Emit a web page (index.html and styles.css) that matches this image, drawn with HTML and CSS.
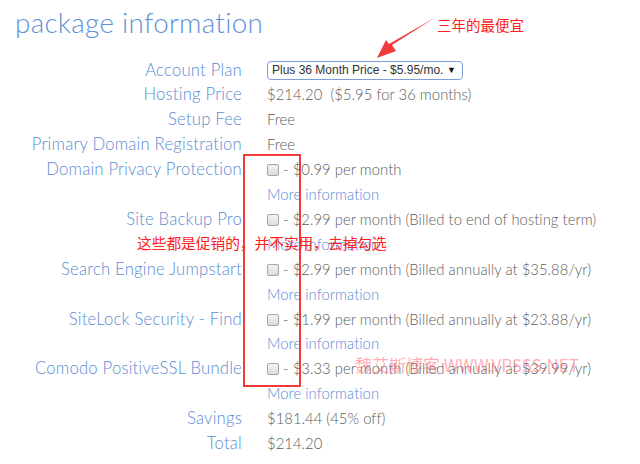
FILE: index.html
```html
<!DOCTYPE html>
<html>
<head>
<meta charset="utf-8">
<link rel="stylesheet" href="styles.css">
</head>
<body>
<div class="page">
  <h1 class="title">package information</h1>
  <div class="grid">
    <div class="lbl">Account Plan</div>
    <div class="val"><div class="select"><span>Plus 36 Month Price - $5.95/mo.</span><span class="caret">▼</span></div></div>

    <div class="lbl">Hosting Price</div>
    <div class="val">$214.20&nbsp; ($5.95 for 36 months)</div>

    <div class="lbl">Setup Fee</div>
    <div class="val">Free</div>

    <div class="lbl">Primary Domain Registration</div>
    <div class="val">Free</div>

    <div class="lbl">Domain Privacy Protection</div>
    <div class="val"><div><span class="cb"></span> - $0.99 per month</div><div class="more">More information</div></div>

    <div class="lbl">Site Backup Pro</div>
    <div class="val"><div><span class="cb"></span> - $2.99 per month (Billed to end of hosting term)</div><div class="more">More information</div></div>

    <div class="lbl">Search Engine Jumpstart</div>
    <div class="val"><div><span class="cb"></span> - $2.99 per month (Billed annually at $35.88/yr)</div><div class="more">More information</div></div>

    <div class="lbl">SiteLock Security - Find</div>
    <div class="val"><div><span class="cb"></span> - $1.99 per month (Billed annually at $23.88/yr)</div><div class="more">More information</div></div>

    <div class="lbl">Comodo PositiveSSL Bundle</div>
    <div class="val"><div><span class="cb"></span> - $3.33 per month (Billed annually at $39.99/yr)</div><div class="more">More information</div></div>

    <div class="lbl">Savings</div>
    <div class="val">$181.44 (45% off)</div>

    <div class="lbl">Total</div>
    <div class="val">$214.20</div>
  </div>

  <div class="redbox"></div>
  <div class="note1">三年的最便宜</div>
  <svg class="arrow" width="70" height="45" viewBox="0 0 70 45"><path d="M66 4 L22 32 L26 38 L7 45 L16 27 L19 31 Z" fill="#f33a3a"/></svg>
  <div class="note2">这些都是促销的，并不实用，去掉勾选</div>
  <div class="watermark">魏艾斯博客 WWW.VPSSS.NET</div>
</div>
</body>
</html>
```
FILE: styles.css
```css
html, body { margin: 0; padding: 0; background: #fff; }
.page {
  position: relative;
  width: 640px;
  height: 464px;
  overflow: hidden;
  font-family: Lato, "Noto Sans", sans-serif;
}
.title {
  margin: 0;
  padding: 4px 0 0 15px;
  height: 57.5px;
  box-sizing: border-box;
  font-weight: 300;
  font-size: 27.8px;
  line-height: 38px;
  color: #5f90d8;
  letter-spacing: 0.3px;
}
.grid {
  display: grid;
  grid-template-columns: 242px 1fr;
  column-gap: 25px;
  line-height: 24.9px;
  align-items: start;
}
.lbl {
  text-align: right;
  color: #5b8cd3;
  font-weight: 300;
  font-size: 16.7px;
  letter-spacing: 0.2px;
  white-space: nowrap;
}
.val {
  color: #5c5c5c;
  font-weight: 300;
  font-size: 14.8px;
  letter-spacing: 0.05px;
  white-space: nowrap;
}
.more { color: #5a8ad6; }
.select {
  display: inline-flex;
  align-items: center;
  justify-content: space-between;
  box-sizing: border-box;
  width: 196px;
  height: 19px;
  margin-top: 3px;
  padding: 0 6px 0 4px;
  border: 1px solid #7c9fd6;
  border-radius: 4px;
  font-family: "Liberation Sans", Arial, sans-serif;
  font-size: 12px;
  line-height: 17px;
  letter-spacing: 0;
  color: #333;
  vertical-align: top;
}
.caret { font-size: 9px; color: #111; }
.cb {
  display: inline-block;
  width: 10px;
  height: 10px;
  border: 1px solid #a5a5a5;
  border-radius: 2px;
  background: linear-gradient(#f4f4f4, #dcdcdc);
  vertical-align: -1px;
}
.redbox {
  position: absolute;
  left: 243px;
  top: 154px;
  width: 54px;
  height: 229px;
  border: 2px solid #f33a3a;
}
.note1, .note2 {
  position: absolute;
  color: #ff2020;
  font-family: "Noto Sans CJK SC", sans-serif;
  white-space: nowrap;
}
.note1 { left: 437px; top: 14px; font-size: 14.5px; line-height: 22px; }
.note2 { left: 137px; top: 232px; font-size: 14.7px; line-height: 22px; }
.arrow { position: absolute; left: 370px; top: 13px; }
.watermark {
  position: absolute;
  left: 355px;
  top: 354px;
  font-family: "Noto Sans CJK SC", sans-serif;
  font-size: 17px;
  line-height: 22px;
  color: rgba(255, 90, 110, 0.5);
  white-space: nowrap;
}
```
